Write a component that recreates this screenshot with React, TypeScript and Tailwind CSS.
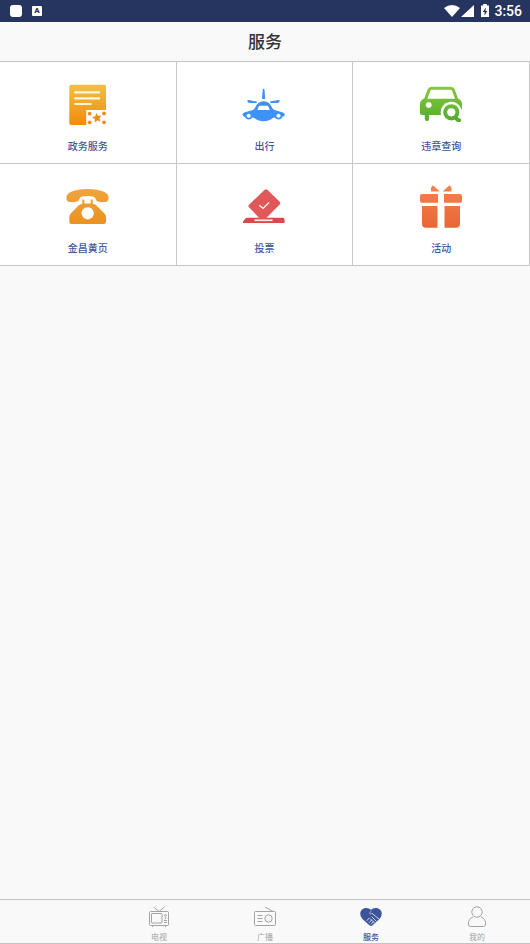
import React, { useState } from 'react';

interface Service {
  name: string;
  icon: React.ReactNode;
}

interface Tab {
  name: string;
  icon: React.ReactNode;
}

const STAR = 'M0-4.800 1.400-1.700 4.800-1.500 2.300.8 3 4.200 0 2.400-3 4.200-2.300.8-4.800-1.500-1.400-1.700Z';

const DocumentIcon = () => (
  <svg viewBox="0 0 44 44" className="size-11" aria-hidden="true">
    <defs>
      <linearGradient id="doc" x1="0" y1="0" x2="0" y2="1">
        <stop offset="0" stopColor="#f0c044" />
        <stop offset="1" stopColor="#f18c08" />
      </linearGradient>
    </defs>
    <path d="M5.300 2.700H38.500a1.500 1.500 0 0 1 1.500 1.500V28H20.200V43H5.300a2 2 0 0 1-2-2V4.700a2 2 0 0 1 2-2Z" fill="url(#doc)" />
    <path d="M9.200 10.400h24M9.200 16.300h24M9.200 22h15.500" stroke="#fff6de" strokeWidth="2.200" strokeLinecap="round" />
    <g fill="#f08b1a">
      <path d={STAR} transform="translate(31 35.800) rotate(-10)" />
      <circle cx="23.700" cy="31.700" r="1.900" />
      <circle cx="38" cy="31.500" r="1.900" />
      <circle cx="23.700" cy="40.300" r="1.900" />
      <circle cx="38" cy="40.300" r="1.900" />
    </g>
  </svg>
);

const TravelIcon = () => (
  <svg viewBox="0 0 44 44" className="size-11" aria-hidden="true">
    <g fill="#3d92f5">
      <path d="M20.700 7.500q.9-1.300 1.800 0L23.200 17h-3.200ZM5.200 18.700q.2-.8 1.500-.6l8.100 1.500v1.300H8q-2.500 0-2.800-2.200ZM37.800 18.700q-.2-.8-1.500-.6l-8.100 1.500v1.300H35q2.500 0 2.800-2.200Z" />
      <path
        fillRule="evenodd"
        d="M12.800 26.300Q15.500 19.300 21.600 19.300T30.400 26.300Q31 27.500 32.500 28L41 30.500q1.800.7 1.800 2.300-.3 1.900-2.300 2-1.200 2.700-4 2.700-2.300 0-3.600-1.900L31.200 35.800Q27.500 39.200 21.600 39.200T12 35.800L10.300 35.600Q9 37.500 6.700 37.500q-2.800 0-4-2.700-1.900-.1-2.200-2 0-1.600 1.800-2.300l8.500-2.500Q12.200 27.500 12.800 26.300ZM17.500 23.800Q15.700 25.500 15.500 28h12.200q-.2-2.500-2-4.200ZM6.700 31.700a2 2 0 1 0 .01 0ZM36.500 31.700a2 2 0 1 0 .01 0Z"
      />
    </g>
  </svg>
);

const CarSearchIcon = () => (
  <svg viewBox="0 0 44 44" className="size-11" aria-hidden="true">
    <defs>
      <linearGradient id="car" x1="0" y1="4" x2="0" y2="40" gradientUnits="userSpaceOnUse">
        <stop offset="0" stopColor="#8cc83c" />
        <stop offset="1" stopColor="#4fae2d" />
      </linearGradient>
    </defs>
    <path
      fillRule="evenodd"
      d="M12.500 4.700h19.500q2.800 0 3.700 2.500l3.300 9.300q4 1.500 4 5.500V33H3.500Q1 33 1 30.500V22q0-4 4.200-5.500L8.700 7.200Q9.700 4.700 12.500 4.700ZM12.700 7.700Q11.700 7.700 11.300 8.700L8.300 16.700H36L33 8.700Q32.600 7.700 31.600 7.700ZM9.700 20a3 3 0 1 0 .01 0Z"
      fill="url(#car)"
    />
    <path d="M7.900 32v5" stroke="#5bb22e" strokeWidth="4.300" strokeLinecap="round" />
    <path d="M22.400 34q-.7-1.800-.7-3.700a10.600 10.600 0 0 1 20.400-4L44 31V34Z" fill="#fff" />
    <circle cx="32.300" cy="30.300" r="6.100" fill="none" stroke="url(#car)" strokeWidth="4" />
    <path d="m37 36 1.700 2.200h1.500" fill="none" stroke="#52af2d" strokeWidth="3.800" strokeLinecap="round" strokeLinejoin="round" />
  </svg>
);

const PhoneIcon = () => (
  <svg viewBox="0 0 44 44" className="size-11" aria-hidden="true">
    <defs>
      <linearGradient id="phone" x1="0" y1="0" x2="0" y2="44" gradientUnits="userSpaceOnUse">
        <stop offset="0" stopColor="#f0a744" />
        <stop offset="1" stopColor="#ea8f1c" />
      </linearGradient>
    </defs>
    <g fill="url(#phone)">
      <path d="M.5 15Q-.2 10.500 4.500 8 11 5 21.500 5t17 3q4.700 2.500 4 7-.6 3-3.500 3-4 .3-7-.5-2-.6-2.200-2.300-.3-2.300-3-2.800-5.300-.8-10.600 0-2.700.5-3 2.800-.2 1.700-2.200 2.300-3 .8-7 .5Q1.100 18 .5 15Z" />
      <path
        fillRule="evenodd"
        d="M16.300 15.500h2v4h6.400v-4h2v4.300q2.500.4 4.300 2.200l7.500 7.500q1.500 1.500 1.500 3.500V37.500q0 2.500-2.500 2.500H5.800q-2.500 0-2.500-2.500V33q0-2 1.500-3.500L12 22q1.800-1.800 4.300-2.200ZM21.700 23.200a6.100 6.100 0 1 0 .01 0Z"
      />
    </g>
  </svg>
);

const VoteIcon = () => (
  <svg viewBox="0 0 44 44" className="size-11" aria-hidden="true">
    <path d="M5 33.700h36q1 0 1.200.8l.6 3q.2 1.500-1.300 1.500H2q-1.500 0-1-1.500l2.500-3q.5-.8 1.500-.8Z" fill="#da4a4c" />
    <path d="M22.700 5.800q1.400-1.200 2.700 0L37.700 17.700q1.300 1.300 0 2.700L24.500 33.700v1.300H17v-1.300L7 23.300q-1.200-1.300 0-2.600Z" fill="#e0585a" />
    <path d="m17.300 21.200 3.800 3.200 6-6" fill="none" stroke="#fff" strokeWidth="1.300" />
    <path d="M12.500 36.300h18" stroke="#fff" strokeWidth="1.600" />
    <path d="M14.500 36.300h14" stroke="#f3b9b9" strokeWidth=".5" />
  </svg>
);

const GiftIcon = () => (
  <svg viewBox="0 0 44 44" className="size-11" aria-hidden="true">
    <defs>
      <linearGradient id="gift" x1="0" y1="0" x2="0" y2="44" gradientUnits="userSpaceOnUse">
        <stop offset="0" stopColor="#f4844c" />
        <stop offset="1" stopColor="#e86636" />
      </linearGradient>
    </defs>
    <g fill="url(#gift)">
      <path d="M14 1.300 20.700 7.500H12.200Q11 3.500 14 1.300ZM30.500 1.300 23.700 7.500H32.200Q33.500 3.500 30.500 1.300Z" />
      <path d="M3 10h16v8.700H3q-2 0-2-2V12q0-2 2-2ZM25 10h16q2 0 2 2v4.700q0 2-2 2H25Z" />
      <path d="M3 22h15.500v21.700H7q-4 0-4-4ZM25.500 22H41v17.700q0 4-4 4H25.500Z" />
    </g>
  </svg>
);

const TvIcon = () => (
  <svg viewBox="0 0 22 22" className="size-[22px]" fill="none" stroke="currentColor" aria-hidden="true">
    <path d="M5.500 1 11 5.500 16.500 1" />
    <rect x="1.500" y="5.500" width="19" height="14" rx="1" />
    <rect x="3.500" y="7.500" width="10.500" height="9.500" rx=".5" />
    <path d="M4.500 19.500V21M17.500 19.500V21M16 14.500h3M16 16.500h3" />
    <circle cx="17.500" cy="9.500" r=".9" />
    <circle cx="17.500" cy="12.200" r=".5" />
  </svg>
);

const RadioIcon = () => (
  <svg viewBox="0 0 22 22" className="size-[22px]" fill="none" stroke="currentColor" aria-hidden="true">
    <rect x=".5" y="5.500" width="21" height="14" rx="1" />
    <path d="m11 1 8 4.500M3.500 9.500h5M3.500 12.500h5M3.500 15.500h5" />
    <circle cx="14.500" cy="12.500" r="3.700" />
  </svg>
);

const HeartIcon = () => (
  <svg viewBox="0 0 22 22" className="size-[22px]" aria-hidden="true">
    <path d="M11 3.800Q8.500 1.500 5.300 2 .8 2.800.2 7.300q-.2 3.300 2.200 5.700l7 6.300q1.600 1.200 3.200 0l7-6.300q2.400-2.400 2.200-5.700-.6-4.500-5.100-5.300-3.200-.5-5.700 1.800Z" fill="currentColor" />
    <g fill="none" stroke="#f9f9f9" strokeWidth=".8" strokeLinecap="round">
      <path d="m12 7.300 7.500 6.200" />
      <path d="m7 14.500 2.300-2.500M9.200 16.500l2.300-2.500M11.200 18l2.300-2.300M12 11l4.300 4.300M10.500 13l3.700 3.700" />
    </g>
    <path d="M11.300 4.500 9.500 7.200q0 1.500 2 .6" fill="none" stroke="#f9f9f9" strokeWidth=".5" />
  </svg>
);

const UserIcon = () => (
  <svg viewBox="0 0 22 22" className="size-[22px]" fill="none" stroke="currentColor" aria-hidden="true">
    <circle cx="11" cy="6" r="5.200" />
    <path d="M7 10.800Q2.300 13 2.300 18q0 2.500 2.500 2.500h12.400q2.500 0 2.500-2.500 0-5-4.700-7.200" />
  </svg>
);

const services: Service[] = [
  { name: '政务服务', icon: <DocumentIcon /> },
  { name: '出行', icon: <TravelIcon /> },
  { name: '违章查询', icon: <CarSearchIcon /> },
  { name: '金昌黄页', icon: <PhoneIcon /> },
  { name: '投票', icon: <VoteIcon /> },
  { name: '活动', icon: <GiftIcon /> },
];

const tabs: Tab[] = [
  { name: '电视', icon: <TvIcon /> },
  { name: '广播', icon: <RadioIcon /> },
  { name: '服务', icon: <HeartIcon /> },
  { name: '我的', icon: <UserIcon /> },
];

const StatusBar = () => (
  <div className="flex h-[22px] shrink-0 items-center justify-between bg-[#26355f] pl-2.5 pr-2 text-white">
    <div className="flex items-center gap-2.5">
      <span className="size-3 rounded-[3px] bg-white" />
      <span className="flex size-2.5 items-center justify-center rounded-[1px] bg-white text-[8px] leading-none font-black text-[#26355f]">
        A
      </span>
    </div>
    <div className="flex items-center gap-1">
      <div className="flex items-center gap-px">
        <svg viewBox="0 0 16 12" className="h-3 w-4" aria-hidden="true">
          <path d="M0 3Q8-3 16 3L8 12Z" fill="currentColor" />
        </svg>
        <svg viewBox="0 0 13 12" className="h-3 w-[13px]" aria-hidden="true">
          <path d="M13 0v12H0Z" fill="currentColor" />
        </svg>
      </div>
      <svg viewBox="0 0 10 14" className="ml-0.5 h-3.5 w-2.5" aria-hidden="true">
        <path d="M3.200 0h3.600v1.500H9V13H1V1.500h2.200Z" fill="currentColor" />
        <path d="M5.800 3.500 2.800 8h1.800v3.500L7.300 7H5.500Z" fill="#26355f" />
      </svg>
      <span className="text-sm leading-none font-medium">3:56</span>
    </div>
  </div>
);

const App: React.FC = () => {
  const [active, setActive] = useState('服务');

  return (
    <div className="flex min-h-screen flex-col bg-[#f9f9f9] font-[Roboto,'Noto_Sans_CJK_SC',sans-serif]">
      <StatusBar />

      <header className="flex h-10 shrink-0 items-center justify-center border-b border-[#c6c6c6]">
        <h1 className="text-[17px] leading-6 font-medium text-[#333]">服务</h1>
      </header>

      <main className="flex-1">
        <div className="grid grid-cols-3">
          {services.map((service) => (
            <button
              key={service.name}
              type="button"
              className="flex cursor-pointer flex-col items-center gap-3 border-r border-b border-[#c6c6c6] bg-white pt-5 pb-[7px]"
            >
              {service.icon}
              <span className="text-[10px] leading-[18px] font-medium text-[#3f57a0]">{service.name}</span>
            </button>
          ))}
        </div>
      </main>

      <nav className="grid shrink-0 grid-cols-5 border-y border-[#c4c4c4]">
        {tabs.map((tab) => (
          <button
            key={tab.name}
            type="button"
            onClick={() => setActive(tab.name)}
            className={`flex cursor-pointer flex-col items-center gap-1 pt-1.5 first:col-start-2 ${
              active === tab.name ? 'font-medium text-[#3c549c]' : 'text-[#a3a3a3]'
            }`}
          >
            {tab.icon}
            <span className="text-[8px] leading-[11px]">{tab.name}</span>
          </button>
        ))}
      </nav>
    </div>
  );
};

export default App;
